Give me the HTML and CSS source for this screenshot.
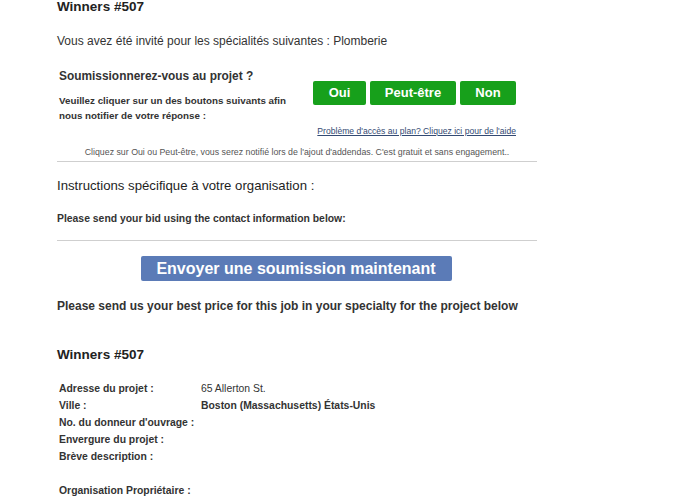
FILE: index.html
```html
<!DOCTYPE html>
<html lang="fr">
<head>
<meta charset="utf-8">
<title>Winners #507</title>
<link rel="stylesheet" href="styles.css">
</head>
<body>
<div class="page">
  <h1 class="title title-top">Winners #507</h1>
  <p class="invite">Vous avez été invité pour les spécialités suivantes : Plomberie</p>

  <div class="rsvp">
    <div class="rsvp-text">
      <h2 class="rsvp-q">Soumissionnerez-vous au projet ?</h2>
      <p class="rsvp-help">Veuillez cliquer sur un des boutons suivants afin nous notifier de votre réponse :</p>
    </div>
    <div class="rsvp-actions">
      <div class="btns">
        <a class="btn btn-oui">Oui</a>
        <a class="btn btn-peut">Peut-être</a>
        <a class="btn btn-non">Non</a>
      </div>
      <a class="help-link">Problème d'accès au plan? Cliquez ici pour de l'aide</a>
    </div>
  </div>
  <p class="notice">Cliquez sur Oui ou Peut-être, vous serez notifié lors de l'ajout d'addendas. C'est gratuit et sans engagement..</p>
  <hr class="rule">

  <h2 class="instr">Instructions spécifique à votre organisation :</h2>
  <p class="instr-text">Please send your bid using the contact information below:</p>
  <hr class="rule">

  <div class="send-wrap"><a class="send-btn">Envoyer une soumission maintenant</a></div>
  <p class="best">Please send us your best price for this job in your specialty for the project below</p>

  <h1 class="title title-second">Winners #507</h1>
  <table class="info">
    <tr><th>Adresse du projet :</th><td>65 Allerton St.</td></tr>
    <tr><th>Ville :</th><td class="strong">Boston (Massachusetts) États-Unis</td></tr>
    <tr><th>No. du donneur d'ouvrage :</th><td></td></tr>
    <tr><th>Envergure du projet :</th><td></td></tr>
    <tr><th>Brève description :</th><td></td></tr>
    <tr class="blank"><th></th><td></td></tr>
    <tr><th>Organisation Propriétaire :</th><td></td></tr>
  </table>
</div>
</body>
</html>
```
FILE: styles.css
```css
* { box-sizing: border-box; }
html, body { margin: 0; padding: 0; background: #fff; }
body {
  font-family: "Liberation Sans", Arial, sans-serif;
  color: #333;
}
.page {
  width: 480px;
  margin-left: 57px;
}
.title {
  font-size: 13.5px;
  font-weight: bold;
  color: #222;
  margin: 0;
  line-height: 16px;
}
.title-top { margin-top: -1px; }
.invite {
  font-size: 12px;
  margin: 18px 0 0;
  line-height: 16px;
}
.rsvp {
  display: flex;
  justify-content: space-between;
  margin-top: 19px;
  padding-left: 2px;
}
.rsvp-text { width: 240px; }
.rsvp-q {
  font-size: 11.9px;
  font-weight: bold;
  margin: 0;
  line-height: 16px;
}
.rsvp-help {
  font-size: 9.8px;
  font-weight: bold;
  margin: 9px 0 0;
  line-height: 15px;
}
.rsvp-actions {
  display: flex;
  flex-direction: column;
  align-items: flex-end;
  padding-top: 13px;
  padding-right: 21px;
}
.btns { display: flex; gap: 4px; }
.btn {
  display: block;
  background: #17a01b;
  color: #fff;
  font-weight: bold;
  font-size: 13px;
  height: 24px;
  line-height: 24px;
  text-align: center;
  border-radius: 2px;
}
.btn-oui { width: 53px; margin-left: 1px; }
.btn-peut { width: 86px; }
.btn-non { width: 56px; }
.help-link {
  font-size: 8.6px;
  color: #334a73;
  text-decoration: underline;
  margin-top: 20px;
  margin-right: 0;
  line-height: 12px;
}
.notice {
  font-size: 8.8px;
  color: #555;
  text-align: center;
  margin: 9px 0 0;
  line-height: 12px;
}
.rule {
  border: 0;
  border-top: 1px solid #cfcfcf;
  margin: 3px 0 0;
  height: 0;
}
.instr {
  font-size: 13.2px;
  font-weight: normal;
  color: #1e1e1e;
  margin: 16px 0 0;
  line-height: 16px;
}
.instr-text {
  font-size: 10.4px;
  font-weight: bold;
  margin: 19px 0 0;
  line-height: 12px;
}
.instr-text + .rule { margin-top: 15px; }
.send-wrap {
  display: flex;
  justify-content: center;
  margin-top: 15px;
  padding-right: 2px;
}
.send-btn {
  display: block;
  width: 311px;
  height: 25px;
  line-height: 25px;
  background: #5b7bb7;
  color: #fff;
  font-weight: bold;
  font-size: 16px;
  text-align: center;
  border-radius: 2px;
}
.best {
  font-size: 12px;
  font-weight: bold;
  margin: 17px 0 0;
  line-height: 16px;
}
.title-second { margin-top: 33px; }
.info {
  border-collapse: collapse;
  margin-top: 17px;
  margin-left: 2px;
  font-size: 10.4px;
}
.info th {
  text-align: left;
  font-weight: bold;
  width: 142px;
  padding: 0;
  height: 17px;
  white-space: nowrap;
}
.info td { padding: 0; height: 17px; }
.info td.strong { font-weight: bold; }
```
